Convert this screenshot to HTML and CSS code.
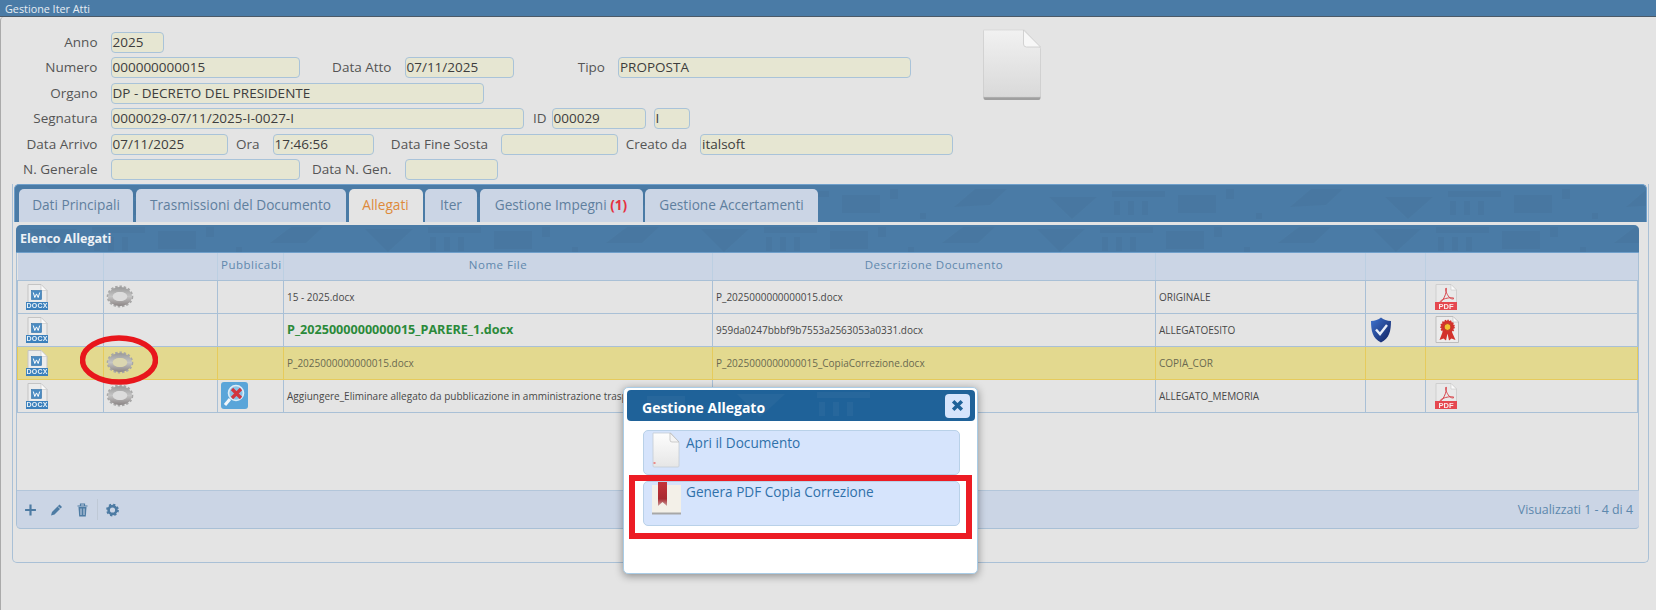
FILE: index.html
```html
<!DOCTYPE html>
<html lang="it">
<head>
<meta charset="utf-8">
<title>Gestione Iter Atti</title>
<link rel="stylesheet" href="styles.css">
</head>
<body>
<svg class="defs" aria-hidden="true">
  <defs>
    <linearGradient id="gPage" x1="0" y1="0" x2="0" y2="1"><stop offset="0" stop-color="#f1f1f1"/><stop offset="1" stop-color="#d9d9d9"/></linearGradient>
    <linearGradient id="gWhite" x1="0" y1="0" x2="0" y2="1"><stop offset="0" stop-color="#fdfdfd"/><stop offset="1" stop-color="#e6e6e6"/></linearGradient>
    <linearGradient id="gGear" x1="0" y1="0" x2="0" y2="1"><stop offset="0" stop-color="#9a9a9a"/><stop offset=".5" stop-color="#c4c4c4"/><stop offset="1" stop-color="#8c8686"/></linearGradient>
    <linearGradient id="gShield" x1="0" y1="0" x2="1" y2="1"><stop offset="0" stop-color="#3f74d0"/><stop offset="1" stop-color="#10205f"/></linearGradient>
    <linearGradient id="gMark" x1="0" y1="0" x2="0" y2="1"><stop offset="0" stop-color="#c4343a"/><stop offset=".7" stop-color="#a92a30"/><stop offset="1" stop-color="#c9a0a0"/></linearGradient>
    <symbol id="i-docx" viewBox="0 0 22 26">
      <path d="M2 .5h13l6 6V19H2z" fill="#ececec" stroke="#c4c4c4"/>
      <path d="M15 .5v6h6z" fill="#fafafa" stroke="#c4c4c4" stroke-width=".6"/>
      <rect x="5.500" y="6.500" width="10" height="9" fill="#4a8bc2" stroke="#2f6ea5" stroke-width=".6"/>
      <path d="M7.300 8.500l1.500 5 1.700-3.600 1.700 3.600 1.500-5" fill="none" stroke="#fff" stroke-width="1"/>
      <rect x="0" y="18" width="22" height="8" fill="#3b80bc"/>
      <text x="11" y="24.400" class="svg-docx" text-anchor="middle">DOCX</text>
    </symbol>
    <symbol id="i-gear" viewBox="0 0 28 23">
      <ellipse cx="14" cy="11.500" rx="12" ry="9.700" fill="none" stroke="#a8a8a8" stroke-width="2.600" stroke-dasharray="2.400 1.800"/>
      <path fill-rule="evenodd" fill="url(#gGear)" d="M14 2c6.600 0 12 4.300 12 9.500S20.600 21 14 21 2 16.700 2 11.500 7.400 2 14 2zm0 5c-4 0-7.200 2-7.200 4.500s3.200 4.500 7.200 4.500 7.200-2 7.200-4.500S18 7 14 7z"/>
      <ellipse cx="14" cy="11.500" rx="7.200" ry="4.500" fill="#d4d4d4" fill-opacity=".5"/>
    </symbol>
    <symbol id="i-pdf" viewBox="0 0 22 26">
      <path d="M1 .5h15l5.500 5.500V26H1z" fill="#e9e9e9" stroke="#cfcfcf"/>
      <path d="M16 .5V6h5.500z" fill="#fbfbfb" stroke="#c8c8c8" stroke-width=".6"/>
      <path d="M11 4c-1.200 2 .8 6 3 9 1.500 1.800 4 2.500 5 1.500-1-1.400-6-.8-10 .5-2 .8-4.500 2.300-4 3.300 1.200.5 5-5 6-10 .4-2 .7-4.500 0-4.300z" fill="none" stroke="#d9474d" stroke-width="1"/>
      <rect x="0" y="18" width="22" height="8" fill="#e5484f"/>
      <text x="11" y="24.600" class="svg-pdf" text-anchor="middle">PDF</text>
    </symbol>
    <symbol id="i-cert" viewBox="0 0 24 27">
      <path d="M1 .5h17l5.500 5.500v20.500H1z" fill="#ececec" stroke="#bdbdbd"/>
      <path d="M18 .5V6h5.500z" fill="#fbfbfb" stroke="#bdbdbd" stroke-width=".6"/>
      <path d="M8 15l-3.500 9 4-1.500 2.500 2 1.500-7 1.500 7 2.500-2 4 1.500L16.500 15z" fill="#d3322c"/>
      <circle cx="12.500" cy="11" r="6.500" fill="#d3322c" stroke="#d3322c" stroke-width="1.600" stroke-dasharray="1.500 1.200"/>
      <circle cx="12.500" cy="11" r="3.400" fill="#f2c230" stroke="#b5261f" stroke-width=".8"/>
    </symbol>
    <symbol id="i-shield" viewBox="0 0 22 26">
      <path d="M11 .5c2.600 2.200 6 3.300 10 3.500 0 9.500-1.500 17.500-10 21.500C2.500 21.500 1 13.500 1 4c4-.2 7.400-1.300 10-3.500z" fill="url(#gShield)"/>
      <path d="M6 12.500l4 4.500 7-9" fill="none" stroke="#e8eef8" stroke-width="2.400"/>
    </symbol>
    <symbol id="i-unpub" viewBox="0 0 27 27">
      <rect width="27" height="27" rx="3" fill="#5aa5d9"/>
      <circle cx="15" cy="11" r="7.500" fill="#8cc1e6" stroke="#dcecf7" stroke-width="1.600"/>
      <path d="M9 17l-5 6" stroke="#f2f7fb" stroke-width="3"/>
      <path d="M11 7l9 9M20 7l-9 9" stroke="#d1343e" stroke-width="3.200"/>
    </symbol>
    <symbol id="i-bigdoc" viewBox="0 0 59 71">
      <path d="M1 1h41l16 18v49a2 2 0 0 1-2 2H3a2 2 0 0 1-2-2z" fill="#9f9f9f" transform="translate(0 1)"/>
      <path d="M1 1h41l16 18v48a1 1 0 0 1-1 1H2a1 1 0 0 1-1-1z" fill="url(#gPage)" stroke="#d0d0d0" stroke-width=".6"/>
      <path d="M41 1v14a3 3 0 0 0 3 3h14z" fill="#f7f7f7" stroke="#c9c9c9" stroke-width=".8"/>
    </symbol>
    <symbol id="i-smalldoc" viewBox="0 0 28 36">
      <path d="M1 1h18l8 9v24a1 1 0 0 1-1 1H2a1 1 0 0 1-1-1z" fill="url(#gWhite)" stroke="#c4cbd4" stroke-width=".8"/>
      <path d="M18 1v7a2 2 0 0 0 2 2h7z" fill="#f4f4f4" stroke="#b9b9b9" stroke-width=".7"/>
      <rect x="1.500" y="30" width="2" height="2" fill="#ea8a8a"/>
    </symbol>
    <symbol id="i-bookmark" viewBox="0 0 29 33">
      <rect x="0" y="3" width="29" height="29" fill="#f3f0e8"/>
      <rect x="0" y="30.500" width="29" height="2" fill="#a7a7a7"/>
      <path d="M6 0h9v24l-4.500-4L6 24z" fill="url(#gMark)"/>
    </symbol>
  </defs>
</svg>

<header class="titlebar">Gestione Iter Atti</header>

<main class="page">
  <section class="top">
    <div class="fields">
      <div class="row">
        <span class="lab w-first">Anno</span><span class="field f53">2025</span>
      </div>
      <div class="row">
        <span class="lab w-first">Numero</span><span class="field f189">000000000015</span>
        <span class="lab w92">Data Atto</span><span class="field f109">07/11/2025</span>
        <span class="lab w91">Tipo</span><span class="field f292">PROPOSTA</span>
      </div>
      <div class="row">
        <span class="lab w-first">Organo</span><span class="field f373">DP - DECRETO DEL PRESIDENTE</span>
      </div>
      <div class="row">
        <span class="lab w-first">Segnatura</span><span class="field f413">0000029-07/11/2025-I-0027-I</span>
        <span class="lab w23 tight">ID</span><span class="field f94">000029</span>
        <span class="field f36 after">I</span>
      </div>
      <div class="row">
        <span class="lab w-first">Data Arrivo</span><span class="field f117">07/11/2025</span>
        <span class="lab w32">Ora</span><span class="field f101">17:46:56</span>
        <span class="lab w114">Data Fine Sosta</span><span class="field f117"></span>
        <span class="lab w69">Creato da</span><span class="field f253">italsoft</span>
      </div>
      <div class="row">
        <span class="lab w-first">N. Generale</span><span class="field f189"></span>
        <span class="lab w92">Data N. Gen.</span><span class="field f93"></span>
      </div>
    </div>
    <svg class="bigdoc"><use href="#i-bigdoc"/></svg>
  </section>

  <section class="tabbox">
    <nav class="tabs">
      <a class="tab t1">Dati Principali</a>
      <a class="tab t2">Trasmissioni del Documento</a>
      <a class="tab t3 active">Allegati</a>
      <a class="tab t4">Iter</a>
      <a class="tab t5">Gestione Impegni <b class="count">(1)</b></a>
      <a class="tab t6">Gestione Accertamenti</a>
    </nav>
    <div class="panel">
      <div class="panel-head">Elenco Allegati</div>
      <table class="grid">
        <colgroup>
          <col class="c1"><col class="c2"><col class="c3"><col class="c4"><col class="c5"><col class="c6"><col class="c7"><col class="c8">
        </colgroup>
        <thead>
          <tr><th></th><th></th><th class="clip">Pubblicabi</th><th>Nome File</th><th>Descrizione Documento</th><th></th><th></th><th></th></tr>
        </thead>
        <tbody>
          <tr>
            <td class="ic"><svg class="i22"><use href="#i-docx"/></svg></td>
            <td class="ig"><svg class="i28"><use href="#i-gear"/></svg></td>
            <td></td>
            <td>15 - 2025.docx</td>
            <td>P_2025000000000015.docx</td>
            <td>ORIGINALE</td>
            <td></td>
            <td class="ip"><svg class="i22"><use href="#i-pdf"/></svg></td>
          </tr>
          <tr>
            <td class="ic"><svg class="i22"><use href="#i-docx"/></svg></td>
            <td></td>
            <td></td>
            <td class="green">P_2025000000000015_PARERE_1.docx</td>
            <td>959da0247bbbf9b7553a2563053a0331.docx</td>
            <td>ALLEGATOESITO</td>
            <td class="is"><svg class="i22"><use href="#i-shield"/></svg></td>
            <td class="ip"><svg class="i24"><use href="#i-cert"/></svg></td>
          </tr>
          <tr class="sel">
            <td class="ic"><svg class="i22"><use href="#i-docx"/></svg></td>
            <td class="ig"><svg class="i28"><use href="#i-gear"/></svg></td>
            <td></td>
            <td>P_2025000000000015.docx</td>
            <td>P_2025000000000015_CopiaCorrezione.docx</td>
            <td>COPIA_COR</td>
            <td></td>
            <td></td>
          </tr>
          <tr>
            <td class="ic"><svg class="i22"><use href="#i-docx"/></svg></td>
            <td class="ig"><svg class="i28"><use href="#i-gear"/></svg></td>
            <td class="iu"><svg class="i27"><use href="#i-unpub"/></svg></td>
            <td class="clip">Aggiungere_Eliminare allegato da pubblicazione in amministrazione trasparente.docx</td>
            <td></td>
            <td>ALLEGATO_MEMORIA</td>
            <td></td>
            <td class="ip"><svg class="i22"><use href="#i-pdf"/></svg></td>
          </tr>
        </tbody>
      </table>
      <div class="spacer"></div>
      <footer class="pager">
        <svg class="tool" viewBox="0 0 12 12"><path d="M6 1v10M1 6h10" stroke="#4d7ba3" stroke-width="2"/></svg>
        <svg class="tool" viewBox="0 0 13 13"><path d="M9.500 1l2.500 2.500-7.500 7.500-3.500 1 1-3.500z" fill="#4d7ba3"/><path d="M8 3l2.500 2.500" stroke="#cbd5e5"/></svg>
        <svg class="tool" viewBox="0 0 12 14"><path d="M1 3h10M4 3V1h4v2" fill="none" stroke="#4d7ba3" stroke-width="1.200"/><path d="M2 4h8l-.7 9.500H2.700z" fill="#4d7ba3"/><path d="M4.500 5.500v6.500M7.500 5.500v6.500" stroke="#cbd5e5"/></svg>
        <span class="sep"></span>
        <svg class="tool cog" viewBox="0 0 12 12"><circle cx="6" cy="6" r="3.600" fill="none" stroke="#4d7ba3" stroke-width="2.400"/><circle cx="6" cy="6" r="5" fill="none" stroke="#4d7ba3" stroke-width="1.800" stroke-dasharray="2 1.930"/></svg>
        <span class="count-text">Visualizzati 1 - 4 di 4</span>
      </footer>
    </div>
  </section>
</main>

<svg class="ring" viewBox="0 0 78 50"><ellipse cx="39" cy="25" rx="36.500" ry="22" fill="none" stroke="#e8161c" stroke-width="5.500"/></svg>

<aside class="dialog">
  <div class="dialog-head">
    <span>Gestione Allegato</span>
    <button class="close" type="button"><svg viewBox="0 0 12 12"><path d="M2 2l8 8M10 2l-8 8" stroke="#1f6299" stroke-width="3.200"/></svg></button>
  </div>
  <div class="action"><svg class="a-doc"><use href="#i-smalldoc"/></svg><span>Apri il Documento</span></div>
  <div class="action"><svg class="a-mark"><use href="#i-bookmark"/></svg><span>Genera PDF Copia Correzione</span></div>
  <div class="redbox"></div>
</aside>
</body>
</html>
```
FILE: styles.css
```css
* { box-sizing: border-box; }
html, body { margin: 0; height: 610px; overflow: hidden; }
body {
  position: relative;
  background: #e4e4e4;
  font-family: "Open Sans", "Liberation Sans", sans-serif;
  color: #444;
}
.defs { position: absolute; width: 0; height: 0; }
.svg-docx { font: 700 7px "Liberation Sans", sans-serif; fill: #e8f1f8; letter-spacing: .2px; }
.svg-pdf { font: 700 7.500px "Liberation Sans", sans-serif; fill: #fbeaea; }
.titlebar {
  height: 17px;
  background: #4a7ba6;
  border-bottom: 1px solid #4b5a68;
  color: #e6edf3;
  font-size: 10.800px;
  line-height: 17px;
  padding-left: 5px;
}
.page {
  height: 593px;
  border-left: 1px solid #aaa;
  border-top-left-radius: 4px;
}
.top { display: flex; padding-top: 15px; height: 167px; }
.fields { width: 981px; display: flex; flex-direction: column; gap: 4.400px; }
.row { display: flex; height: 21px; font-size: 13.500px; }
.lab { margin-right: 13px; text-align: right; white-space: nowrap; line-height: 20px; color: #555; flex: none; }
.lab.tight { margin-right: 5px; }
.w-first { width: 96.500px; }
.w92 { width: 92px; }
.w91 { width: 91.500px; }
.w23 { width: 23px; }
.w32 { width: 32px; }
.w114 { width: 114.500px; }
.w69 { width: 69px; }
.field {
  flex: none;
  display: block;
  height: 21px;
  background: #e6e6d2;
  border: 1px solid #a9c3d9;
  border-radius: 4px;
  padding-left: 1px;
  font-size: 13.500px;
  line-height: 19px;
  color: #3d3d3d;
  white-space: nowrap;
}
.after { margin-left: 8px; }
.f36 { width: 36px; }
.f53 { width: 53px; }
.f93 { width: 93px; }
.f94 { width: 94px; }
.f101 { width: 101px; }
.f109 { width: 109px; }
.f117 { width: 117px; }
.f189 { width: 189px; }
.f253 { width: 253px; }
.f292 { width: 293px; }
.f373 { width: 373px; }
.f413 { width: 413px; }
.bigdoc { width: 60px; height: 71px; margin-top: -3px; flex: none; }

.tabbox {
  margin: 0 7px 0 11px;
  height: 379px;
  border: 1px solid #a9c0d6;
  border-top: 0;
  border-radius: 0 0 5px 5px;
}
.tabs {
  height: 38px;
  display: flex;
  align-items: flex-end;
  padding-left: 4px;
  margin-left: 1px;
  margin-right: 1px;
  border-radius: 5px 5px 0 0;
  border: 1px solid #6f9fca;
  border-bottom-width: 0;
  background: #4a7ba6 url("data:image/svg+xml,%3Csvg xmlns='http://www.w3.org/2000/svg' width='336' height='40'%3E%3Cg fill='%2340688c' fill-opacity='.2'%3E%3Cpath d='M13 12h48L36 34zM254 22L275 4h32l-17 16zM142 10h38v18h-38zM76 6h53v6H76zM78 16h6v14h-6zM92 16h6v14h-6zM106 16h6v14h-6zM190 4h8v10h-8zM220 28h6v6h-6z'/%3E%3C/g%3E%3C/svg%3E") 13px 0;
}
.tab {
  height: 33px;
  margin-right: 2.500px;
  background: #cbd5e5;
  border-radius: 5px 5px 0 0;
  font-size: 13.650px;
  line-height: 31px;
  text-align: center;
  color: #5f7f9e;
  flex: none;
}
.t1 { width: 114px; }
.t2 { width: 210px; }
.t3 { width: 74px; margin-left: .500px; }
.t4 { width: 52px; }
.t5 { width: 163px; }
.t6 { width: 173px; }
.tab.active { background: #e4e4e4; color: #de8a3b; height: 34px; margin-bottom: -1px; position: relative; }
.count { color: #e5303f; }

.panel {
  margin: 3px 9px 0 3px;
  height: 304px;
  display: flex;
  flex-direction: column;
  border: 1px solid #a9c0d6;
  border-top: 0;
  border-radius: 5px;
}
.panel-head {
  flex: none;
  height: 28px;
  margin: 0 -1px;
  border-radius: 5px 5px 0 0;
  border-bottom: 1px solid #6f9fca;
  background: #4a7ba6 url("data:image/svg+xml,%3Csvg xmlns='http://www.w3.org/2000/svg' width='336' height='28'%3E%3Cg fill='%2340688c' fill-opacity='.2'%3E%3Cpath d='M13 4h48L36 27zM254 18L275 2h32l-17 16zM142 6h38v18h-38zM76 2h53v6H76zM78 12h6v14h-6zM92 12h6v14h-6zM106 12h6v14h-6zM190 2h8v10h-8zM220 22h6v6h-6z'/%3E%3C/g%3E%3C/svg%3E") 0 0;
  color: #eef2f6;
  font-weight: 700;
  font-size: 12.500px;
  line-height: 28px;
  padding-left: 4px;
}
.grid {
  flex: none;
  width: 1620px;
  table-layout: fixed;
  border-collapse: collapse;
  font-size: 10px;
}
.c1 { width: 86px; }
.c2 { width: 114px; }
.c3 { width: 66px; }
.c4 { width: 429px; }
.c5 { width: 443px; }
.c6 { width: 210px; }
.c7 { width: 60px; }
.c8 { width: 212px; }
.grid th {
  height: 27px;
  padding: 0 0 3px;
  background: #cbd5e5;
  border-left: 1px solid #bccfe2;
  border-bottom: 1px solid #a9c0d6;
  font-weight: 400;
  font-size: 11.500px;
  letter-spacing: .5px;
  color: #6088ad;
}
.grid th:first-child { border-left: 0; }
.grid td {
  height: 33px;
  padding: 0 3px;
  border: 1px solid #a9c0d6;
  white-space: nowrap;
  overflow: hidden;
  color: #484848;
}
.grid th.clip { text-align: left; padding-left: 3px; white-space: nowrap; overflow: hidden; }
.grid td.ic { padding-left: 8px; }
.grid td.ip { padding-left: 9px; }
.grid td.ig { padding-left: 2px; }
.grid td.iu { padding-left: 3px; }
.grid td.is { padding-left: 4px; }
.grid td.green { color: #2b8a3a; font-weight: 700; font-size: 12.600px; }
.grid tr.sel td { background: #e3d98f; border-color: #e6cb5c; color: #6a6a50; }
.grid svg { display: block; filter: blur(.35px); }
.grid .i28 { filter: blur(.6px); }
.i22 { width: 22px; height: 26px; }
.i24 { width: 24px; height: 27px; }
.i27 { width: 27px; height: 27px; }
.i28 { width: 28px; height: 23px; }
.spacer { flex: 1; }
.pager {
  flex: none;
  height: 39px;
  margin: 0 -1px -1px 0;
  background: #cbd5e5;
  border-top: 1px solid #b3c6da;
  border-bottom: 1px solid #a9c0d6;
  border-radius: 0 0 4px 4px;
  display: flex;
  align-items: center;
  padding-left: 7px;
  gap: 13px;
}
.tool { width: 13px; height: 14px; flex: none; }
.sep { width: 1px; height: 21px; background: #bfc9d6; margin: 0 -5px; }
.count-text { margin-left: auto; margin-right: 6px; font-size: 12.400px; color: #5d88ad; }

.ring { position: absolute; left: 80px; top: 335px; width: 78px; height: 50px; }
.dialog {
  position: absolute;
  left: 623px;
  top: 387px;
  width: 355px;
  height: 187px;
  background: #fff;
  border: 1px solid #a9cce6;
  border-radius: 5px;
  box-shadow: 0 2px 9px rgba(0, 0, 0, .4);
  padding: 2px 2px 0 3px;
}
.dialog-head {
  height: 31px;
  display: flex;
  align-items: center;
  justify-content: space-between;
  padding: 0 5px 0 15px;
  background: #1f6299 url("data:image/svg+xml,%3Csvg xmlns='http://www.w3.org/2000/svg' width='336' height='31'%3E%3Cg fill='%23356f9f' fill-opacity='.35'%3E%3Cpath d='M110 4h48l-25 23zM20 6h38v18H20zM190 2h53v6h-53zM192 12h6v14h-6zM206 12h6v14h-6zM220 12h6v14h-6z'/%3E%3C/g%3E%3C/svg%3E");
  border-radius: 4px;
  color: #fff;
  font-weight: 700;
  font-size: 14px;
}
.dialog-head span { padding-top: 3px; }
.close {
  width: 25px;
  height: 24px;
  padding: 5px 6px;
  border: 0;
  border-radius: 4px;
  background: #d6e4fb;
}
.close svg { display: block; width: 13px; height: 13px; }
.action {
  margin: 9px 0 0 16px;
  width: 317px;
  height: 45px;
  display: flex;
  gap: 6px;
  padding: 1px 0 0 8px;
  background: #d6e4fc;
  border: 1px solid #b9d1e8;
  border-radius: 5px;
  font-size: 13.600px;
  line-height: 22px;
  color: #3071aa;
}
.action + .action { margin-top: 6px; padding-top: 0; line-height: 20px; gap: 5px; }
.a-doc { width: 28px; height: 36px; flex: none; }
.a-mark { width: 29px; height: 33px; flex: none; }
.redbox {
  position: absolute;
  left: 5px;
  top: 87px;
  width: 343px;
  height: 64px;
  border: 6px solid #ec1c24;
}
```
